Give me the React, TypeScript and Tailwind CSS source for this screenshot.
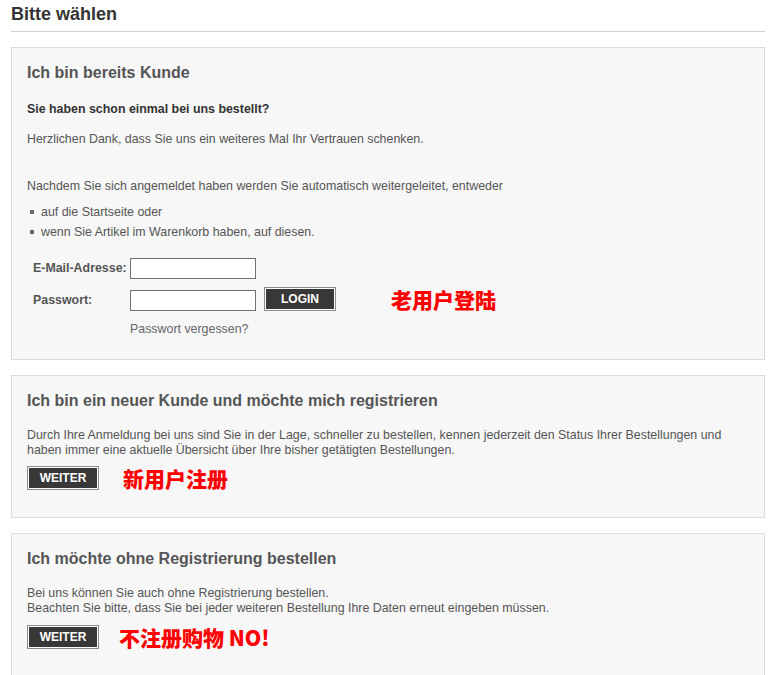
import React from "react";

const F = "font-['Liberation_Sans',Arial,'Noto_Sans_CJK_SC',sans-serif]";

function Btn({ label }: { label: string }) {
  return (
    <button className="h-[24px] w-[72px] border border-[#8a8a8a] bg-white p-0">
      <span className="flex h-full w-full items-center justify-center border border-white bg-[#383838] text-[12px] font-bold leading-none text-white">
        {label}
      </span>
    </button>
  );
}

function Red({ children, className = "" }: { children: React.ReactNode; className?: string }) {
  return (
    <span
      className={`font-['Noto_Sans_CJK_SC','Liberation_Sans',sans-serif] text-[21px] font-black leading-none text-[#ff0000] ${className}`}
    >
      {children}
    </span>
  );
}

function Panel({ children, className = "" }: { children: React.ReactNode; className?: string }) {
  return (
    <div className={`border border-[#dcdcdc] bg-[#f7f7f7] pl-[15px] pr-[15px] pt-[15px] ${className}`}>
      {children}
    </div>
  );
}

function H({ children }: { children: React.ReactNode }) {
  return <h2 className="text-[16px] font-bold leading-[20px] text-[#555]">{children}</h2>;
}

export default function App() {
  return (
    <div className={`${F} min-h-[675px] bg-white pl-[11px] pr-[8px] text-[12.4px] text-[#555]`}>
      <h1 className="mt-[3px] border-b border-[#cfcfcf] pb-[6px] text-[18px] font-bold leading-[22px] text-[#333]">
        Bitte wählen
      </h1>

      <div className="mt-[15px] flex flex-col gap-[15px]">
        <Panel className="h-[313px]">
          <H>Ich bin bereits Kunde</H>
          <p className="mt-[19px] font-bold leading-[15px] text-[#333]">
            Sie haben schon einmal bei uns bestellt?
          </p>
          <p className="mt-[15px] leading-[15px]">
            Herzlichen Dank, dass Sie uns ein weiteres Mal Ihr Vertrauen schenken.
          </p>
          <p className="mt-[32px] leading-[15px]">
            Nachdem Sie sich angemeldet haben werden Sie automatisch weitergeleitet, entweder
          </p>
          <ul className="mt-[8px]">
            {["auf die Startseite oder", "wenn Sie Artikel im Warenkorb haben, auf diesen."].map((t) => (
              <li key={t} className="flex items-center leading-[20px]">
                <span className="ml-[3px] mr-[7px] inline-block h-[4px] w-[4px] bg-[#666]" />
                {t}
              </li>
            ))}
          </ul>
          <div className="ml-[6px] mt-[16px] flex flex-col">
            <div className="flex items-center">
              <label className="w-[97px] font-bold">E-Mail-Adresse:</label>
              <input className="h-[21px] w-[126px] border border-[#707070] bg-white" />
            </div>
            <div className="mt-[8px] flex items-center">
              <label className="mt-[3px] w-[97px] font-bold">Passwort:</label>
              <input type="password" className="mt-[3px] h-[21px] w-[126px] border border-[#707070] bg-white" />
              <span className="ml-[8px]">
                <Btn label="LOGIN" />
              </span>
              <Red className="ml-[55px]">老用户登陆</Red>
            </div>
            <p className="ml-[97px] mt-[11px] leading-[15px] text-[#666]">Passwort vergessen?</p>
          </div>
        </Panel>

        <Panel className="h-[143px]">
          <H>Ich bin ein neuer Kunde und möchte mich registrieren</H>
          <p className="mt-[17px] leading-[15px]">
            Durch Ihre Anmeldung bei uns sind Sie in der Lage, schneller zu bestellen, kennen jederzeit den Status Ihrer Bestellungen und
            <br />
            haben immer eine aktuelle Übersicht über Ihre bisher getätigten Bestellungen.
          </p>
          <div className="mt-[8px] flex items-center">
            <Btn label="WEITER" />
            <Red className="ml-[24px]">新用户注册</Red>
          </div>
        </Panel>

        <Panel className="h-[160px]">
          <H>Ich möchte ohne Registrierung bestellen</H>
          <p className="mt-[17px] leading-[15px]">
            Bei uns können Sie auch ohne Registrierung bestellen.
            <br />
            Beachten Sie bitte, dass Sie bei jeder weiteren Bestellung Ihre Daten erneut eingeben müssen.
          </p>
          <div className="mt-[9px] flex items-center">
            <Btn label="WEITER" />
            <Red className="ml-[20px]">不注册购物 NO!</Red>
          </div>
        </Panel>
      </div>
    </div>
  );
}
